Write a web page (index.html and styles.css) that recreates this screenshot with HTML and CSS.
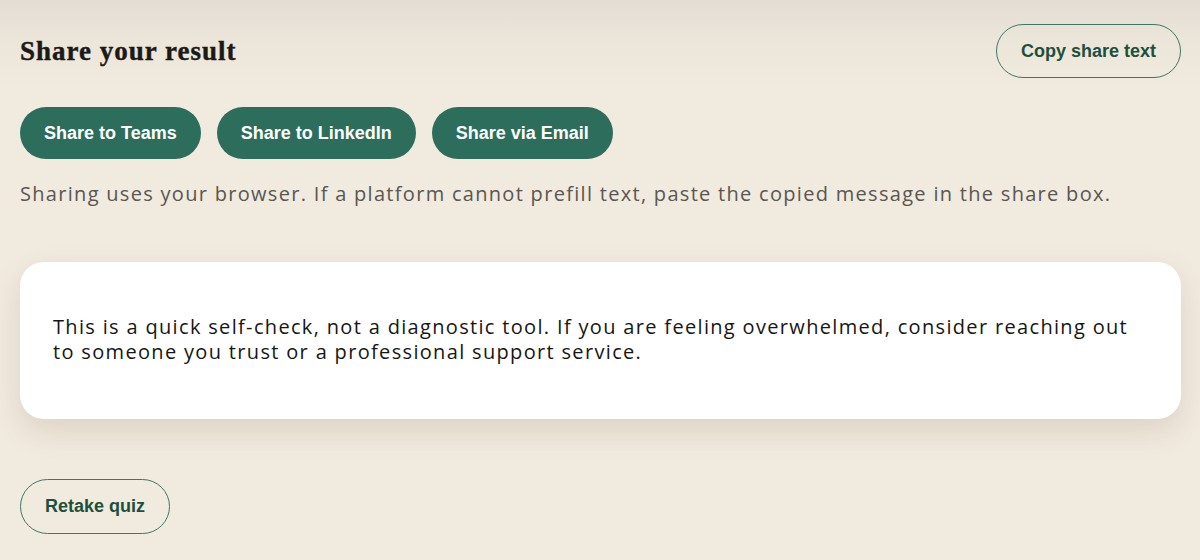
FILE: index.html
```html
<!DOCTYPE html>
<html lang="en">
<head>
<meta charset="utf-8">
<title>Share your result</title>
<link rel="stylesheet" href="styles.css">
</head>
<body>
<main class="page">
  <section class="share">
    <header class="share-head">
      <h2 class="share-title">Share your result</h2>
      <button class="btn btn-outline btn-copy" type="button">Copy share text</button>
    </header>
    <div class="share-actions">
      <button class="btn btn-solid" type="button">Share to Teams</button>
      <button class="btn btn-solid" type="button">Share to LinkedIn</button>
      <button class="btn btn-solid" type="button">Share via Email</button>
    </div>
    <p class="share-note">Sharing uses your browser. If a platform cannot prefill text, paste the copied message in the share box.</p>
  </section>
  <section class="notice">
    <p>This is a quick self-check, not a diagnostic tool. If you are feeling overwhelmed, consider reaching out to someone you trust or a professional support service.</p>
  </section>
  <div class="footer-actions">
    <button class="btn btn-outline btn-retake" type="button">Retake quiz</button>
  </div>
</main>
</body>
</html>
```

FILE: styles.css
```css
* { box-sizing: border-box; }
html, body { margin: 0; height: 100%; }
body {
  background: linear-gradient(180deg, #e4ddd3 0px, #ece5da 40px, #f1eadf 90px, #f1eadf 100%);
  font-family: "Open Sans", "Liberation Sans", sans-serif;
  overflow: hidden;
}
.page {
  padding: 24px 19px 0 20px;
}
.share-head {
  display: flex;
  justify-content: space-between;
  align-items: center;
}
.share-title {
  margin: 0;
  font-family: "Liberation Serif", "DejaVu Serif", serif;
  font-weight: 700;
  font-size: 27px;
  letter-spacing: 1px;
  color: #1c1a17;
  -webkit-text-stroke: 0.4px #1c1a17;
}
.btn {
  font-family: "Liberation Sans", Arial, sans-serif;
  font-weight: 700;
  font-size: 18px;
  border-radius: 999px;
  cursor: pointer;
}
.btn-solid {
  background: #2c6e5b;
  color: #ffffff;
  border: none;
  height: 52px;
  padding: 0 24px;
}
.btn-outline {
  background: transparent;
  color: #1d4f3c;
  border: 1.5px solid #3f7763;
  padding: 0 24px;
}
.btn-copy { height: 54px; }
.btn-retake { height: 55px; }
.share-actions {
  display: flex;
  gap: 16px;
  margin-top: 29px;
}
.share-note {
  margin: 21px 0 0;
  font-size: 20px;
  line-height: 28px;
  letter-spacing: 1.3px;
  color: #5a5651;
}
.notice {
  margin-top: 54px;
  background: #ffffff;
  border-radius: 24px;
  padding: 52px 40px 55px 33px;
  box-shadow: 0 12px 30px rgba(120, 95, 60, 0.16);
}
.notice p {
  margin: 0;
  font-size: 20px;
  line-height: 25px;
  letter-spacing: 1.33px;
  color: #161614;
}
.footer-actions {
  margin-top: 60px;
}
```
